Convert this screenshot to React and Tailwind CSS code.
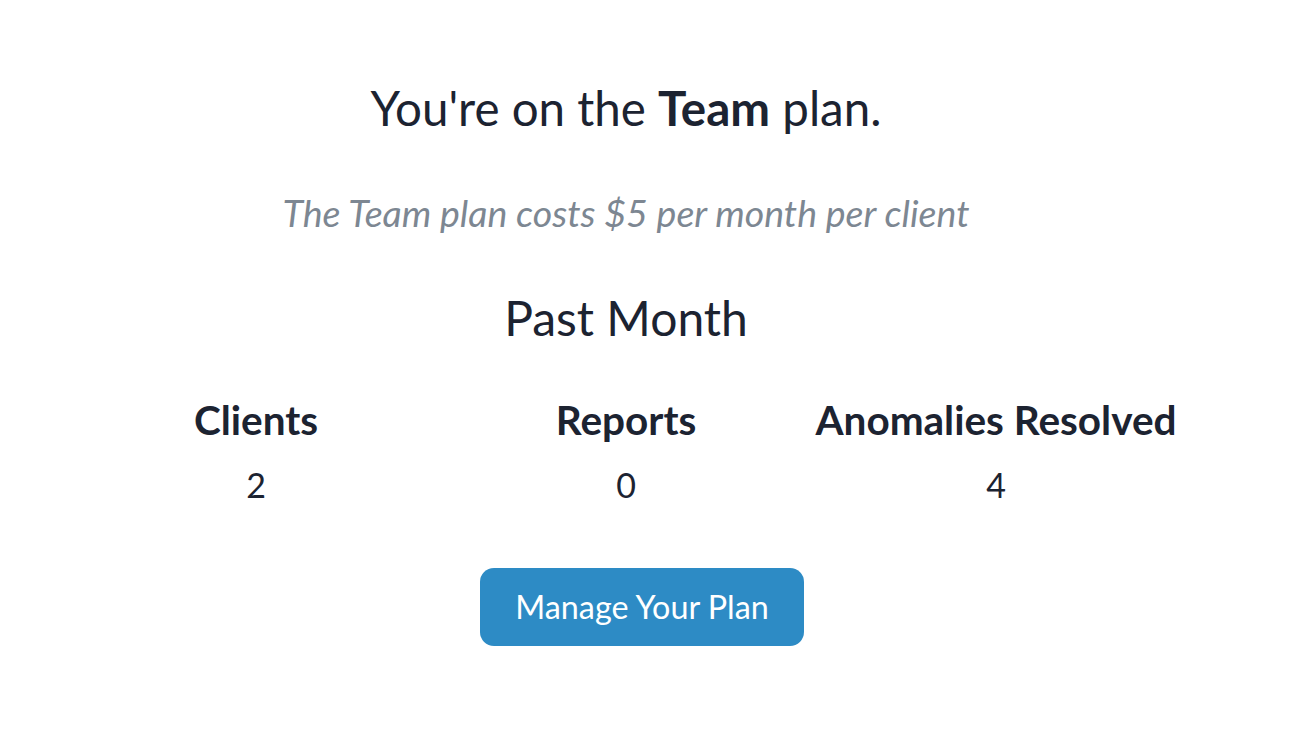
import React from "react";

export default function App() {
  return (
    <div className="min-h-[740px] bg-white text-[#1c2331]" style={{ fontFamily: "Lato, 'Noto Sans', sans-serif" }}>
      <div className="ml-[71px] w-[1110px] flex flex-col items-center pt-[76px]">
        <h1 className="text-[47.5px] leading-[64px] font-normal whitespace-nowrap">
          You're on the <span className="font-bold">Team</span> plan.
        </h1>
        <p className="mt-[48px] text-[37.5px] leading-[50px] italic text-[#7d8792] whitespace-nowrap">
          The Team plan costs $5 per month per client
        </p>
        <h2 className="mt-[48px] text-[48px] leading-[64px] whitespace-nowrap">Past Month</h2>
        <div className="mt-[44px] grid grid-cols-3 w-full text-center">
          <div className="flex flex-col items-center">
            <div className="text-[40.5px] leading-[52px] font-bold whitespace-nowrap">Clients</div>
            <div className="mt-[19px] text-[34px] leading-[40px]">2</div>
          </div>
          <div className="flex flex-col items-center">
            <div className="text-[40.5px] leading-[52px] font-bold whitespace-nowrap">Reports</div>
            <div className="mt-[19px] text-[34px] leading-[40px]">0</div>
          </div>
          <div className="flex flex-col items-center">
            <div className="text-[40.5px] leading-[52px] font-bold whitespace-nowrap">Anomalies Resolved</div>
            <div className="mt-[19px] text-[34px] leading-[40px]">4</div>
          </div>
        </div>
      </div>
      <div className="pl-[480px] mt-[63px]">
        <button className="w-[324px] h-[78px] rounded-[14px] bg-[#2d8bc5] text-white text-[32.3px] whitespace-nowrap">
          Manage Your Plan
        </button>
      </div>
    </div>
  );
}
